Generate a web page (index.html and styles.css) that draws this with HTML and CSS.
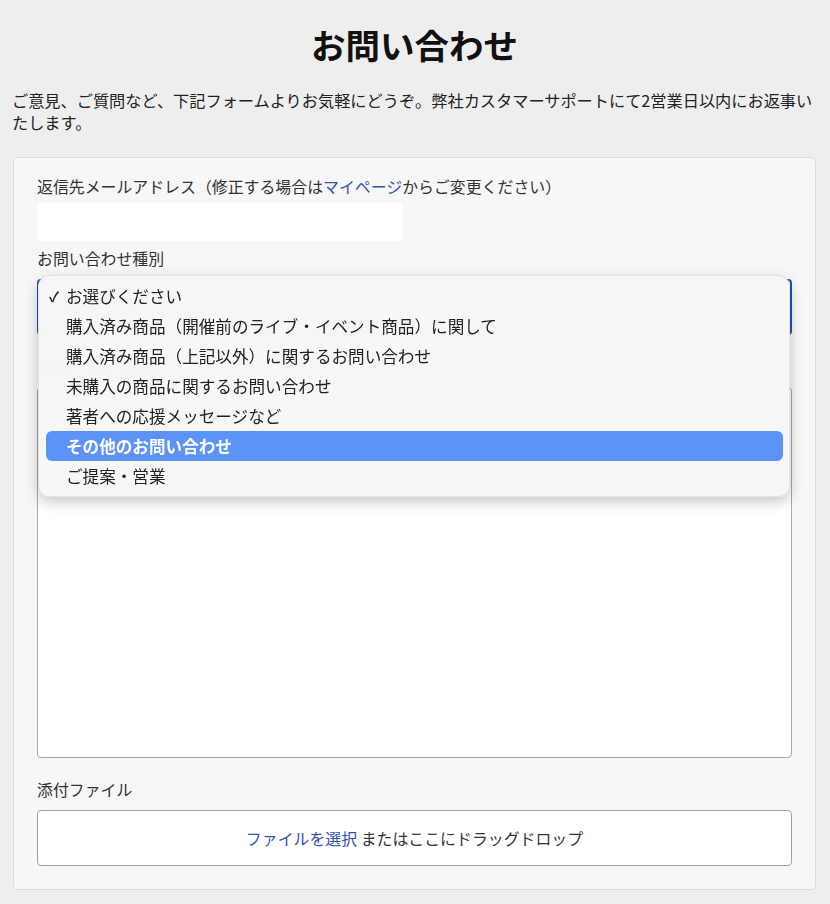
FILE: index.html
```html
<!DOCTYPE html>
<html>
<head>
    <meta charset="utf-8">
    <title>お問い合わせ</title>
    <link rel="stylesheet" href="styles.css">
</head>
<body>
    <h1>お問い合わせ</h1>
    <p class="lead">ご意見、ご質問など、下記フォームよりお気軽にどうぞ。弊社カスタマーサポートにて2営業日以内にお返事いたします。</p>

    <div class="card">
        <label class="label first">返信先メールアドレス（修正する場合は<a href="#">マイページ</a>からご変更ください）</label>
        <div class="mail-box"></div>

        <label class="label">お問い合わせ種別</label>
        <div class="select-wrap">
            <div class="select-box">
                <span>お選びください</span>
                <span class="chev"></span>
            </div>
            <ul class="menu">
                <li class="checked"><span class="check">✓</span>お選びください</li>
                <li>購入済み商品（開催前のライブ・イベント商品）に関して</li>
                <li>購入済み商品（上記以外）に関するお問い合わせ</li>
                <li>未購入の商品に関するお問い合わせ</li>
                <li>著者への応援メッセージなど</li>
                <li class="active">その他のお問い合わせ</li>
                <li>ご提案・営業</li>
            </ul>
        </div>

        <label class="label body-label">お問い合わせ内容</label>
        <textarea class="message"></textarea>

        <label class="label file-label">添付ファイル</label>
        <div class="dropzone">
            <span><a href="#">ファイルを選択</a> またはここにドラッグドロップ</span>
        </div>
    </div>
</body>
</html>
```

FILE: styles.css
```css
body {
    margin: 0;
    padding: 0 14px 0 13px;
    background-color: #eeeeee;
    color: #222;
    font-family: "Noto Sans CJK JP", "Noto Sans", sans-serif;
}

h1 {
    margin: 24px 0 0;
    font-size: 34.5px;
    line-height: 40px;
    font-weight: bold;
    text-align: center;
    color: #111;
}

.lead {
    margin: 25px 0 0 -1px;
    font-size: 16.2px;
    line-height: 22px;
    color: #222;
}

.card {
    margin-top: 24px;
    background-color: #f7f7f7;
    border: 1px solid #dcdcdc;
    border-radius: 4px;
    padding: 18px 23px 23px;
}

.label {
    display: block;
    font-size: 15.9px;
    line-height: 22px;
    color: #333;
    margin-top: 7px;
}

.label a,
.dropzone a {
    color: #2f52b4;
    text-decoration: none;
}

.label.first {
    margin-top: 0;
}

.mail-box {
    width: 366px;
    height: 38px;
    margin-top: 5px;
    background-color: #fff;
}

.select-wrap {
    position: relative;
    margin-top: 9px;
}

.select-box {
    height: 52px;
    border: 2px solid #1f4fb8;
    border-radius: 4px;
    background-color: #f1f5fb;
    display: flex;
    align-items: center;
    justify-content: space-between;
    padding: 0 20px;
    font-size: 16px;
    color: #333;
}

.chev {
    width: 8px;
    height: 8px;
    border-right: 2px solid #666;
    border-bottom: 2px solid #666;
    transform: rotate(45deg);
    margin-top: -4px;
}

/* open dropdown list drawn over the fields below */
.menu {
    position: absolute;
    top: -4px;
    left: 1px;
    right: 2px;
    z-index: 2;
    margin: 0;
    padding: 5px 6px 5px 7px;
    list-style: none;
    background-color: rgba(247, 247, 248, 0.96);
    backdrop-filter: blur(6px);
    border: 1px solid rgba(0, 0, 0, 0.08);
    border-radius: 12px;
    box-shadow: 0 5px 14px rgba(0, 0, 0, 0.22);
}

.menu li {
    position: relative;
    height: 30px;
    line-height: 31px;
    padding-left: 20px;
    font-size: 16.6px;
    color: #222;
    border-radius: 6px;
}

.menu .check {
    position: absolute;
    left: 3px;
    top: 0;
    font-size: 14px;
    font-weight: bold;
}

.menu li.active {
    background-color: #5b93f7;
    color: #fff;
    font-weight: bold;
}

.body-label {
    margin-top: 22px;
}

.message {
    display: block;
    box-sizing: border-box;
    width: 100%;
    height: 371px;
    margin-top: 8px;
    border: 1px solid #a8a8a8;
    border-radius: 4px;
    background-color: #fff;
    resize: none;
}

.file-label {
    margin-top: 21px;
}

.dropzone {
    margin-top: 9px;
    height: 54px;
    border: 1px solid #a0a0a0;
    border-radius: 4px;
    background-color: #fff;
    display: flex;
    align-items: center;
    justify-content: center;
    font-size: 15.9px;
    color: #333;
}
```
